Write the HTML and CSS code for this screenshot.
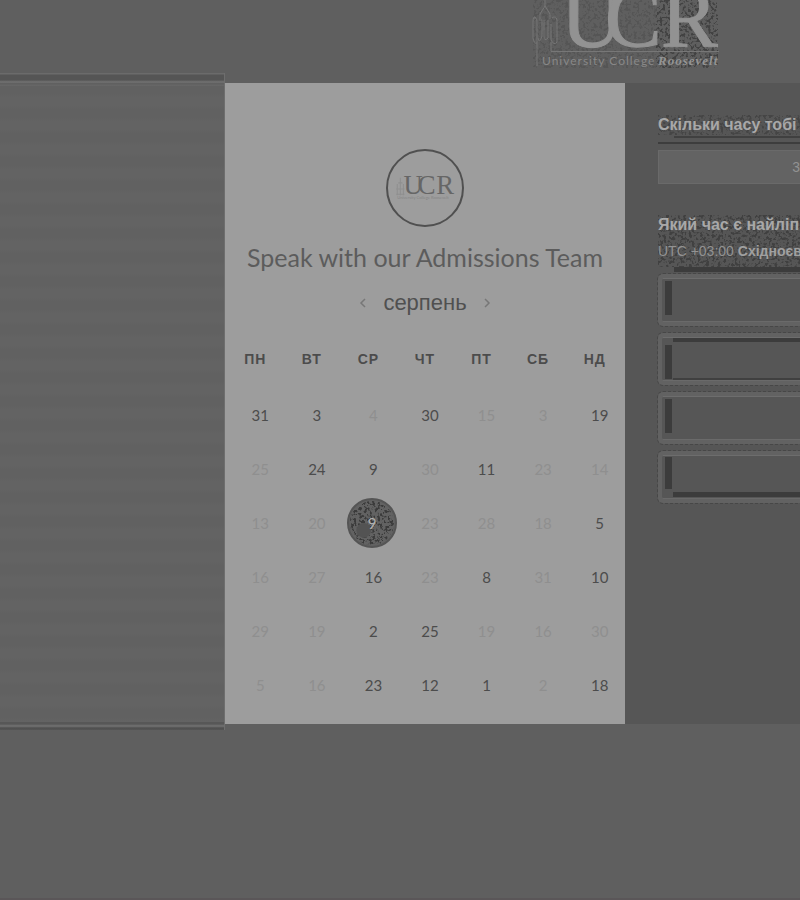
FILE: index.html
```html
<!DOCTYPE html>
<html lang="uk">
<head>
<meta charset="utf-8">
<meta name="viewport" content="width=device-width, initial-scale=1">
<title>Speak with our Admissions Team</title>
<link rel="stylesheet" href="styles.css">
</head>
<body>
<svg class="defs" width="0" height="0" aria-hidden="true">
  <defs>
    <filter id="grain" x="0" y="0" width="100%" height="100%" color-interpolation-filters="sRGB">
      <feTurbulence type="fractalNoise" baseFrequency="0.35" numOctaves="2" seed="4"/>
      <feColorMatrix values="0 0 0 0 0.23  0 0 0 0 0.23  0 0 0 0 0.23  8 0 0 0 -4"/>
      <feComposite operator="in" in2="SourceGraphic"/>
    </filter>
    <g id="tower" fill="none" stroke="currentColor">
      <path d="M12 0V6M12 6L7 14V19M12 6L17 14V19M3 18Q0 15 0 22V38Q1 44 4 43V22Q4 17 1 18M6 20H9V36Q6 45 5 38M15 20V38Q11 42 11 36V20M19 18Q23 15 24 20V42Q21 46 18 40V24M4 43V66M18 42V51"/>
    </g>
  </defs>
</svg>

<header class="header">
  <svg class="brand" viewBox="530 0 194 70" role="img" aria-label="University College Roosevelt">
    <rect class="grain" x="533" y="0" width="124" height="68" opacity=".25"/>
    <rect class="grain" x="656" y="0" width="62" height="68" opacity=".8"/>
    <use href="#tower" x="533" y="0" class="brand-line"/>
    <path class="brand-line" d="M551 51.5H719"/>
    <g class="brand-big">
      <text x="561" y="47">U</text><text x="605" y="47">C</text><text x="661" y="47">R</text>
    </g>
    <text class="brand-name" x="542" y="65">University College</text>
    <text class="brand-strong" x="658" y="65">Roosevelt</text>
  </svg>
</header>

<main class="booking">
  <div class="side"></div>

  <section class="calendar">
    <div class="avatar">
      <svg viewBox="0 0 72 72" role="img" aria-label="UCR">
        <path class="avatar-tower" d="M12 26V43M9 32V43M15 32V43M10 31H14M8 37H16M8 42H16"/>
        <g class="avatar-big">
          <text x="15" y="42">U</text><text x="29" y="42">C</text><text x="47" y="42">R</text>
        </g>
        <text class="avatar-name" x="9" y="47">University College Roosevelt</text>
      </svg>
    </div>
    <h1 class="title">Speak with our Admissions Team</h1>
    <div class="month">
      <button class="arrow" type="button" aria-label="Попередній місяць"><svg viewBox="0 0 8 12"><path d="M6 2L2 6L6 10"/></svg></button>
      <h2 class="month-name">серпень</h2>
      <button class="arrow" type="button" aria-label="Наступний місяць"><svg viewBox="0 0 8 12"><path d="M2 2L6 6L2 10"/></svg></button>
    </div>
    <table class="days">
      <thead>
        <tr><th>ПН</th><th>ВТ</th><th>СР</th><th>ЧТ</th><th>ПТ</th><th>СБ</th><th>НД</th></tr>
      </thead>
      <tbody>
        <tr><td><button>31</button></td><td><button>3</button></td><td><button disabled>4</button></td><td><button>30</button></td><td><button disabled>15</button></td><td><button disabled>3</button></td><td><button>19</button></td></tr>
        <tr><td><button disabled>25</button></td><td><button>24</button></td><td><button>9</button></td><td><button disabled>30</button></td><td><button>11</button></td><td><button disabled>23</button></td><td><button disabled>14</button></td></tr>
        <tr><td><button disabled>13</button></td><td><button disabled>20</button></td><td><button class="selected" aria-pressed="true"><svg class="texture" viewBox="0 0 50 50" aria-hidden="true"><circle class="grain" cx="25" cy="25" r="24"/><circle cx="16" cy="33" r="8" fill="#535353"/></svg><span>9</span></button></td><td><button disabled>23</button></td><td><button disabled>28</button></td><td><button disabled>18</button></td><td><button>5</button></td></tr>
        <tr><td><button disabled>16</button></td><td><button disabled>27</button></td><td><button>16</button></td><td><button disabled>23</button></td><td><button>8</button></td><td><button disabled>31</button></td><td><button>10</button></td></tr>
        <tr><td><button disabled>29</button></td><td><button disabled>19</button></td><td><button>2</button></td><td><button>25</button></td><td><button disabled>19</button></td><td><button disabled>16</button></td><td><button disabled>30</button></td></tr>
        <tr><td><button disabled>5</button></td><td><button disabled>16</button></td><td><button>23</button></td><td><button>12</button></td><td><button>1</button></td><td><button disabled>2</button></td><td><button>18</button></td></tr>
      </tbody>
    </table>
  </section>

  <section class="slots">
    <div class="question duration-question">
      <svg class="noise" aria-hidden="true"><rect class="grain" width="100%" height="100%"/></svg>
      <h2>Скільки часу тобі</h2>
    </div>
    <button class="duration" type="button">3</button>
    <div class="question time-question">
      <svg class="noise" aria-hidden="true"><rect class="grain" width="100%" height="100%"/></svg>
      <h2>Який час є найліп</h2>
      <p>UTC +03:00 <b>Східноєв</b></p>
    </div>
    <div class="options">
      <button class="option" type="button" aria-label="Час 1"></button>
      <button class="option option-top" type="button" aria-label="Час 2"></button>
      <button class="option" type="button" aria-label="Час 3"></button>
      <button class="option option-bottom" type="button" aria-label="Час 4"></button>
    </div>
  </section>
</main>
</body>
</html>
```
FILE: styles.css
```css
* { box-sizing: border-box; }

body {
  margin: 0;
  min-height: 100vh;
  overflow-x: hidden;
  background: #5f5f5f;
  border-bottom: 2px solid #5a5658;
  font-family: "Liberation Sans", Arial, sans-serif;
  color: #4c4c4c;
}

button {
  padding: 0;
  border: 0;
  background: none;
  color: inherit;
  font: inherit;
}

h1, h2, p { margin: 0; font-weight: 400; }

.defs { position: absolute; }
.grain { filter: url(#grain); }

.header {
  display: flex;
  justify-content: flex-end;
  height: 83px;
  padding-right: 76px;
}

.brand { width: 194px; height: 70px; color: #777; }
.brand-line { fill: none; stroke: #777; }
.brand-big { font: 85px "Liberation Serif", serif; fill: #929292; stroke: #929292; }
.brand-name { font: 12px Lato, sans-serif; letter-spacing: 1px; fill: #888; }
.brand-strong { font: italic bold 13px "Liberation Serif", serif; letter-spacing: 1px; fill: #949494; }

.booking {
  display: grid;
  grid-template-columns: 9fr 16fr 7fr;
}

.side {
  margin: -10px 0 -6px;
  border-right: 1px solid #6e6e6e;
  background:
    linear-gradient(#6b6b6b 1px, #555 2px, #555 7px, #737373 9px, #5a5a5a 11px, #6c6c6c 12px, transparent 13px) top / 100% 14px no-repeat,
    linear-gradient(#575757 0, #575757 2px, #737373 4px, #4f4f4f 6px, #555 8px) bottom / 100% 8px no-repeat,
    repeating-linear-gradient(#636363 0, #636363 8px, #616161 12px, #616161 20px, #636363 24px);
}

.calendar {
  display: flex;
  flex-direction: column;
  align-items: center;
  padding: 66px 2px 12px;
  background: #9d9d9d;
}

.avatar {
  width: 78px;
  height: 78px;
  border: 2px solid #505050;
  border-radius: 50%;
}
.avatar svg { display: block; width: 100%; }
.avatar-big { font: 26px "Liberation Serif", serif; fill: #666; }
.avatar-tower { fill: none; stroke: #8f8f8f; }
.avatar-name { font: 4px Lato, sans-serif; fill: #858585; }

.title {
  margin-top: 14px;
  font: 25px/32px Lato, sans-serif;
  white-space: nowrap;
  color: #5c5c5c;
}

.month {
  display: flex;
  align-items: center;
  gap: 16px;
  height: 30px;
  margin-top: 15px;
}
.month-name { font-size: 22px; line-height: 30px; color: #505050; }
.arrow svg {
  display: block;
  width: 8px;
  height: 12px;
  fill: none;
  stroke: #777;
  stroke-width: 1.5;
}

.days {
  width: 100%;
  margin-top: 11px;
  border-collapse: collapse;
  table-layout: fixed;
}
.days th { height: 59px; padding: 0; font-size: 14px; letter-spacing: 1px; }
.days td { height: 54px; padding: 0 0 0 10px; text-align: center; }
.days td button {
  width: 44px;
  height: 44px;
  border-radius: 50%;
  font: 15px Lato, sans-serif;
}
.days td button:disabled { color: #8f8f8f; }
.days td .selected {
  position: relative;
  display: block;
  width: 50px;
  height: 50px;
  margin: 0 auto 0 -3px;
  background: #626262;
  border: 2px solid #555;
  color: #b0b0b0;
}
.texture { position: absolute; inset: 0; width: 100%; height: 100%; }
.selected span { position: relative; }

.slots {
  overflow: hidden;
  padding: 22px 0 0 33px;
  background: #565656;
  white-space: nowrap;
}

.question { position: relative; color: #a8a8a8; }
.question h2 { position: relative; font-size: 16px; font-weight: 700; line-height: 20px; }
.question p { position: relative; font-size: 14px; line-height: 20px; color: #929292; }
.question b { color: #a0a0a0; }
.noise { position: absolute; inset: 0; width: 100%; height: 100%; }

.duration-question {
  height: 42px;
  padding-top: 10px;
  background:
    linear-gradient(#3d3d3d, #3d3d3d) 0 37px / 100% 2px no-repeat,
    linear-gradient(#404040, #404040) 16px 31px / 100% 2px no-repeat;
}
.duration-question .noise { top: 10px; height: 20px; opacity: .6; }

.duration {
  display: block;
  width: 100%;
  height: 34px;
  margin-top: 3px;
  border: 1px solid #6a6a6a;
  border-right: 0;
  background: #636363;
  color: #929292;
  font-size: 14px;
  text-align: right;
  overflow: hidden;
}

.time-question {
  height: 58px;
  margin-top: 31px;
  background: linear-gradient(#3c3c3c, #3c3c3c) 16px 52px / 100% 5px no-repeat;
}
.time-question h2 { margin-bottom: 6px; }
.time-question .noise { height: 52px; opacity: .8; }

.options {
  display: flex;
  flex-direction: column;
  gap: 7px;
  margin-top: 1px;
}
.option {
  height: 52px;
  border: 4px solid #626262;
  border-right: 0;
  border-radius: 5px 0 0 5px;
  outline: 1px dashed #474747;
  background: linear-gradient(#3c3c3c, #3c3c3c) 3px 3px / 7px 34px no-repeat;
  box-shadow: inset 0 1px #6d6d6d, inset 0 -1px #6a6a6a;
}
.option-top {
  background:
    linear-gradient(#3c3c3c, #3c3c3c) 11px 1px / 100% 4px no-repeat,
    linear-gradient(#3c3c3c, #3c3c3c) 3px 8px / 7px 34px no-repeat,
    linear-gradient(#404040, #404040) 11px 41px / 100% 2px no-repeat;
}
.option-bottom {
  background:
    linear-gradient(#3c3c3c, #3c3c3c) 11px 37px / 100% 5px no-repeat,
    linear-gradient(#3c3c3c, #3c3c3c) 3px 2px / 7px 32px no-repeat;
}
```
